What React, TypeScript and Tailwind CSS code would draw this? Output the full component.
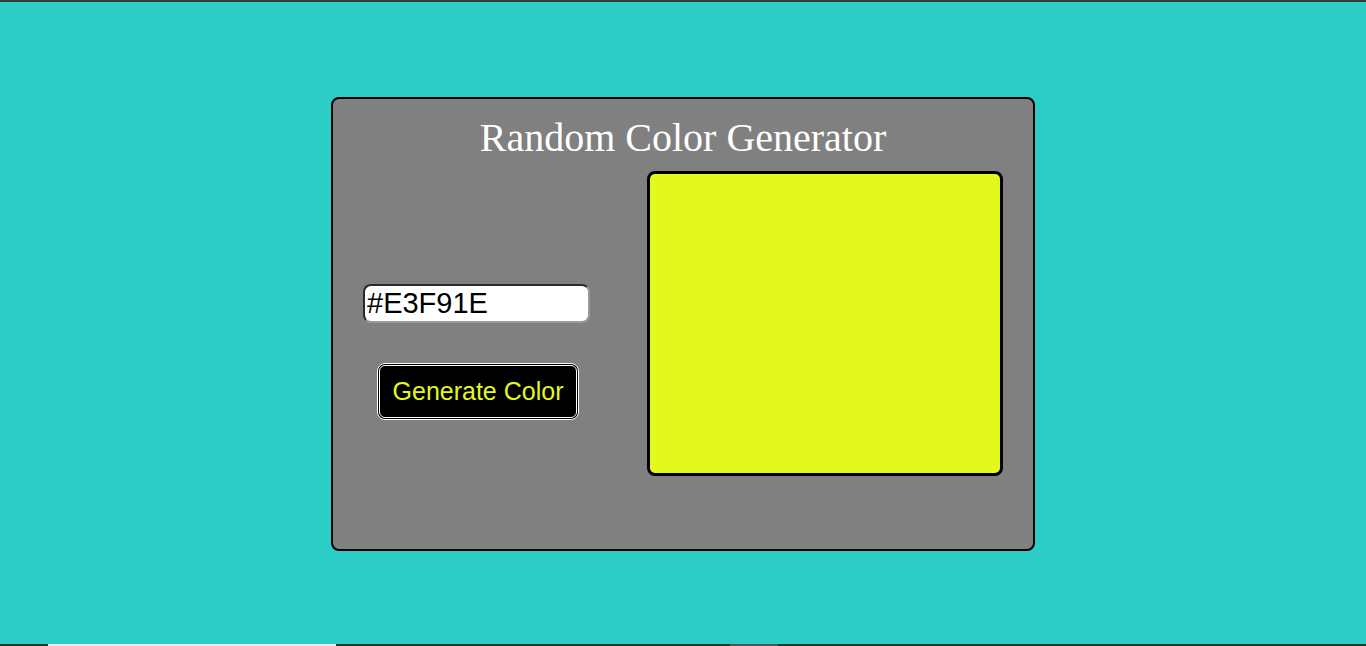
import React, { useState } from "react";

const randomHex = () =>
  "#" +
  Math.floor(Math.random() * 0xffffff)
    .toString(16)
    .toUpperCase()
    .padStart(6, "0");

export default function App() {
  const [color, setColor] = useState("#E3F91E");

  return (
    <div className="h-[646px] flex flex-col bg-[#2ccdc4] overflow-hidden">
      <div className="h-[2px] bg-[#343c3b]" />
      <main className="flex-1 flex justify-center pt-[95px]">
        <div className="w-[704px] h-[454px] flex flex-col bg-[#808080] border-2 border-black rounded-[8px]">
          <h1 className="pt-[19px] text-center text-[40px] leading-none text-white font-['Liberation_Serif','Times_New_Roman',serif]">
            Random Color Generator
          </h1>
          <div className="flex pl-[30px] mt-[13px]">
            <div className="w-[227px] flex flex-col items-center mt-[113px]">
              <input
                value={color}
                readOnly
                className="w-[227px] h-[39px] px-[2px] bg-white rounded-[8px] border-2 border-t-[#2a2a2a] border-l-[#2a2a2a] border-r-[#9a9a9a] border-b-[#9a9a9a] text-[29px] leading-none text-black outline-none font-['Liberation_Sans',Arial,sans-serif]"
              />
              <button
                onClick={() => setColor(randomHex())}
                style={{ color }}
                className="mt-[40px] ml-[3px] w-[202px] h-[57px] bg-black rounded-[8px] border-[3px] border-double border-white text-[25px] font-['Liberation_Sans',Arial,sans-serif]"
              >
                Generate Color
              </button>
            </div>
            <div
              style={{ backgroundColor: color }}
              className="ml-[57px] w-[356px] h-[305px] border-[3px] border-black rounded-[8px]"
            />
          </div>
        </div>
      </main>
      <div className="h-[2px] flex bg-[#1d3b2b]">
        <div className="ml-[48px] w-[288px] bg-[#e8ece9]" />
        <div className="ml-[394px] w-[48px] bg-[#4a5a52]" />
      </div>
    </div>
  );
}
